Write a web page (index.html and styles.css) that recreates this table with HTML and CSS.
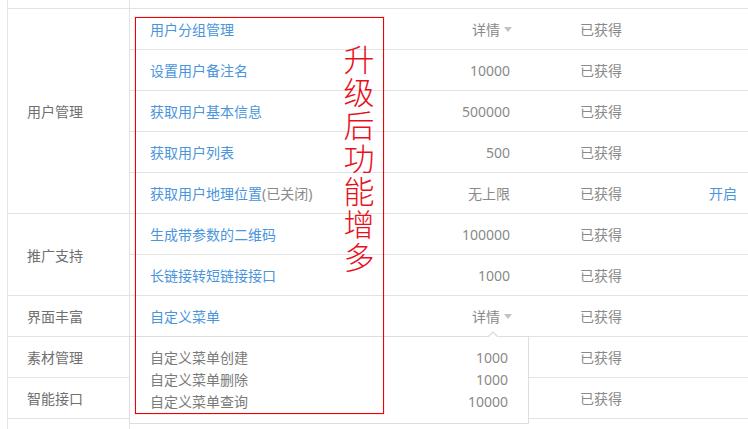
FILE: index.html
```html
<!DOCTYPE html>
<html lang="zh-CN">
<head>
<meta charset="utf-8">
<title>接口权限</title>
<link rel="stylesheet" href="styles.css">
</head>
<body>
<div class="page">
  <div class="table">
    <div class="groups">
      <div class="g g-top"></div>
      <div class="g g5">用户管理</div>
      <div class="g g2">推广支持</div>
      <div class="g g1">界面丰富</div>
      <div class="g g1">素材管理</div>
      <div class="g g1">智能接口</div>
      <div class="g g-rest"></div>
    </div>
    <div class="rows">
      <div class="row row-top"></div>
      <div class="row"><span class="name">用户分组管理</span><span class="num detail">详情<i class="caret"></i></span><span></span><span class="status">已获得</span><span class="act"></span></div>
      <div class="row"><span class="name">设置用户备注名</span><span class="num">10000</span><span></span><span class="status">已获得</span><span class="act"></span></div>
      <div class="row"><span class="name">获取用户基本信息</span><span class="num">500000</span><span></span><span class="status">已获得</span><span class="act"></span></div>
      <div class="row"><span class="name">获取用户列表</span><span class="num">500</span><span></span><span class="status">已获得</span><span class="act"></span></div>
      <div class="row"><span class="name">获取用户地理位置<em class="off">(已关闭)</em></span><span class="num">无上限</span><span></span><span class="status">已获得</span><span class="act">开启</span></div>
      <div class="row"><span class="name">生成带参数的二维码</span><span class="num">100000</span><span></span><span class="status">已获得</span><span class="act"></span></div>
      <div class="row"><span class="name">长链接转短链接接口</span><span class="num">1000</span><span></span><span class="status">已获得</span><span class="act"></span></div>
      <div class="row"><span class="name">自定义菜单</span><span class="num detail">详情<i class="caret"></i></span><span></span><span class="status">已获得</span><span class="act"></span></div>
      <div class="row"><span class="name"></span><span class="num"></span><span></span><span class="status">已获得</span><span class="act"></span></div>
      <div class="row"><span class="name"></span><span class="num"></span><span></span><span class="status">已获得</span><span class="act"></span></div>
      <div class="row row-rest"></div>
    </div>
  </div>

  <div class="popup">
    <div class="pop-item"><span>自定义菜单创建</span><span class="pop-num">1000</span></div>
    <div class="pop-item"><span>自定义菜单删除</span><span class="pop-num">1000</span></div>
    <div class="pop-item"><span>自定义菜单查询</span><span class="pop-num">10000</span></div>
  </div>

  <div class="redbox"></div>
  <div class="redtext">升<br>级<br>后<br>功<br>能<br>增<br>多</div>
</div>
</body>
</html>
```

FILE: styles.css
```css
* { box-sizing: border-box; }
html, body { margin: 0; padding: 0; background: #fff; }
body {
  font-family: "Noto Sans", "Noto Sans CJK SC", sans-serif;
  font-size: 14px;
  color: #8a8a8a;
}
.page {
  position: relative;
  width: 748px;
  height: 429px;
  overflow: hidden;
}
.table {
  display: flex;
  margin-left: 7px;
  border-left: 1px solid #e3e3e3;
  height: 429px;
}
.groups {
  width: 122px;
  flex: none;
  border-right: 1px solid #e3e3e3;
  display: flex;
  flex-direction: column;
}
.g {
  border-bottom: 1px solid #e3e3e3;
  display: flex;
  align-items: center;
  padding-left: 19px;
  color: #707070;
}
.g-top { height: 9px; }
.g5 { height: 205px; }
.g2 { height: 82px; }
.g1 { height: 41px; }
.g-rest { flex: 1; border-bottom: none; }

.rows {
  flex: 1;
  display: flex;
  flex-direction: column;
}
.row {
  height: 41px;
  border-bottom: 1px solid #e3e3e3;
  display: grid;
  grid-template-columns: 270px 110px 70px 129px 1fr;
  align-items: center;
}
.row-top { height: 9px; display: block; }
.row-rest { flex: 1; border-bottom: none; }
.name {
  padding-left: 20px;
  color: #4a95dc;
}
.off { font-style: normal; color: #8a8a8a; }
.num {
  text-align: right;
  color: #8a8a8a;
}
.detail {
  display: flex;
  justify-content: flex-end;
  align-items: center;
  gap: 4px;
}
.caret {
  display: block;
  width: 0;
  height: 0;
  border-left: 4px solid transparent;
  border-right: 4px solid transparent;
  border-top: 5px solid #c2c2c2;
  margin-right: -2px;
}
.status { color: #8a8a8a; }
.act { color: #4a95dc; }

.popup {
  position: absolute;
  left: 129px;
  top: 336px;
  width: 400px;
  height: 88px;
  background: #fff;
  border: 1px solid #dedede;
  padding-top: 10px;
  display: flex;
  flex-direction: column;
}
.popup::before,
.popup::after {
  content: "";
  position: absolute;
  width: 0;
  height: 0;
  border-left: 6px solid transparent;
  border-right: 6px solid transparent;
}
.popup::before {
  left: 357px;
  top: -6px;
  border-bottom: 6px solid #dedede;
}
.popup::after {
  left: 358px;
  top: -4px;
  border-left-width: 5px;
  border-right-width: 5px;
  border-bottom: 5px solid #fff;
}
.pop-item {
  height: 22px;
  line-height: 22px;
  display: flex;
  justify-content: space-between;
  padding-left: 20px;
  padding-right: 20px;
  color: #7a7a7a;
}
.pop-num { color: #8a8a8a; }

.redbox {
  position: absolute;
  left: 135px;
  top: 17px;
  width: 249px;
  height: 397px;
  border: 1px solid #f00000;
  box-shadow: 0 0 1px rgba(220, 0, 0, 0.5);
}
.redtext {
  position: absolute;
  left: 341px;
  top: 41px;
  width: 36px;
  font-family: "Noto Sans CJK SC", sans-serif;
  font-weight: 300;
  font-size: 31px;
  line-height: 33px;
  color: #e8101a;
  text-align: center;
}
```
